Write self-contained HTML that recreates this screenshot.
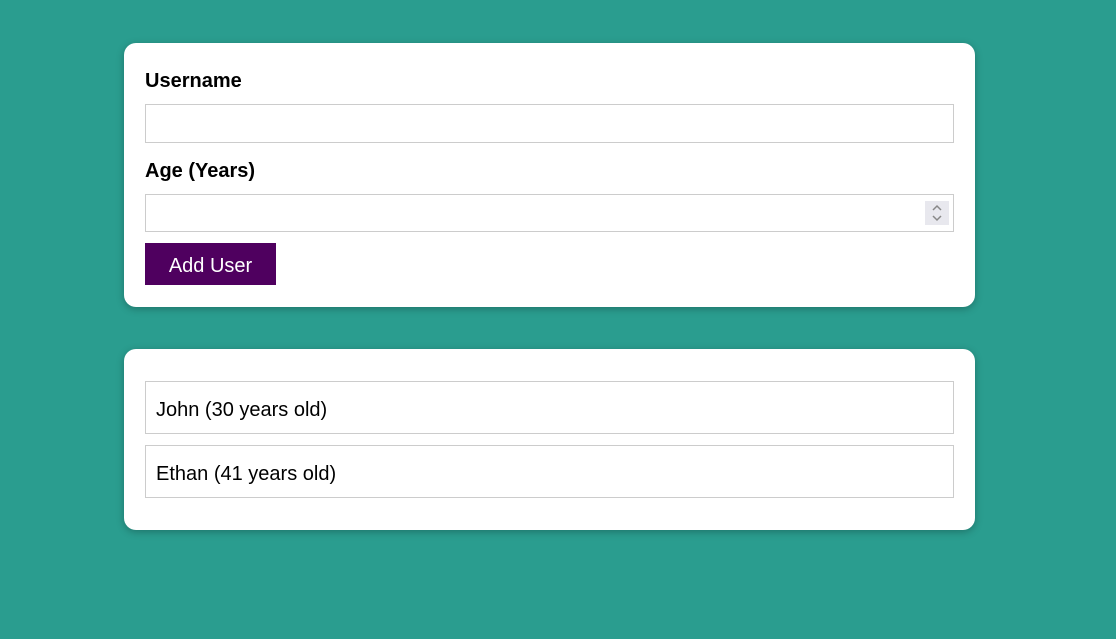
<!DOCTYPE html>
<html><head><style>
body{margin:0;background:#2a9d8f;font-family:"Liberation Sans",sans-serif;width:1116px;height:639px;position:relative;overflow:hidden}
.card{position:absolute;left:124px;width:851px;background:#fff;border-radius:12px;box-shadow:0 2px 8px rgba(0,0,0,.26)}
.lbl{position:absolute;left:21px;font-weight:bold;font-size:20px;color:#000}
.inp{position:absolute;left:21px;width:809px;border:1px solid #ccc;box-sizing:border-box}
.btn{position:absolute;left:21px;top:200px;width:131px;height:42px;background:#4f005f;color:#fff;font-size:20px;text-align:center;line-height:46px}
.item{position:absolute;left:21px;width:809px;height:53px;border:1px solid #ccc;box-sizing:border-box;font-size:20px;padding-left:10px;line-height:57px}
</style></head><body>
<div class="card" style="top:43px;height:264px">
<div class="lbl" style="top:27px">Username</div>
<div class="inp" style="top:61px;height:39px"></div>
<div class="lbl" style="top:117px">Age (Years)</div>
<div class="inp" style="top:151px;height:38px">
<svg style="position:absolute;right:4px;top:6px" width="24" height="24"><rect width="24" height="24" fill="#e8e8ee"/><path d="M8 9l4-4 4 4M8 15l4 4 4-4" stroke="#888" stroke-width="1.5" fill="none"/></svg></div>
<div class="btn">Add User</div>
</div>
<div class="card" style="top:349px;height:181px">
<div class="item" style="top:32px">John (30 years old)</div>
<div class="item" style="top:96px">Ethan (41 years old)</div>
</div>
</body></html>
